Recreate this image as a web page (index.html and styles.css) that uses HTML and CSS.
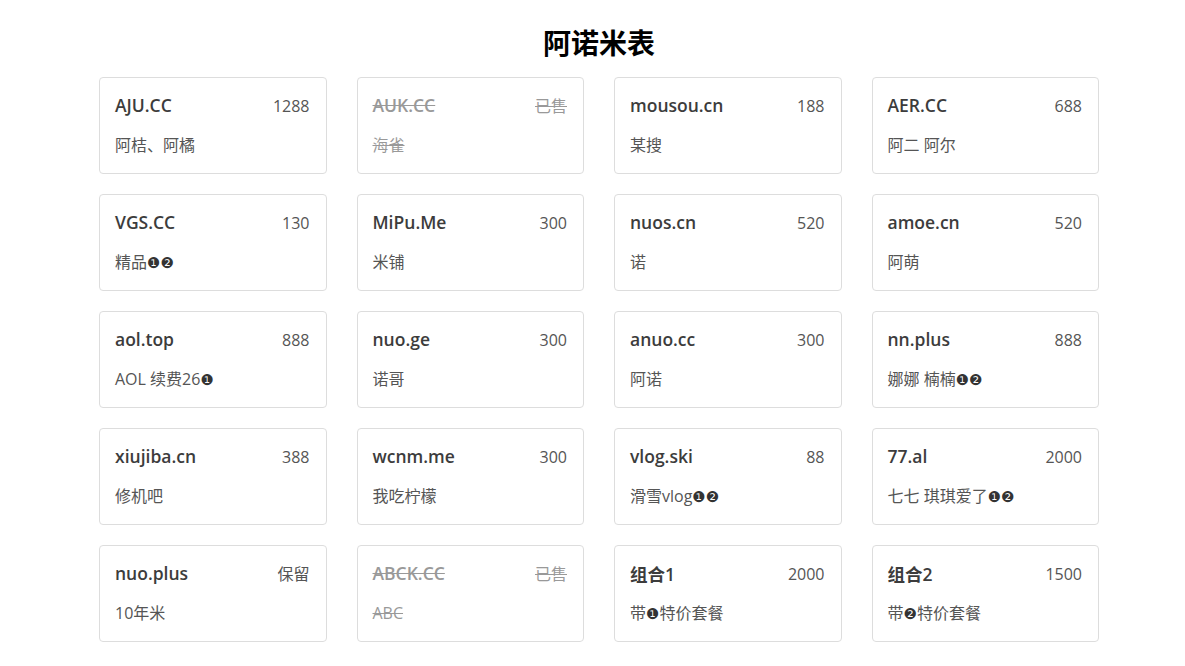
FILE: index.html
```html
<!DOCTYPE html>
<html lang="zh-CN">
<head>
<meta charset="utf-8">
<title>阿诺米表</title>
<link rel="stylesheet" href="styles.css">
</head>
<body>
<div class="page">
  <h1 class="title">阿诺米表</h1>
  <div class="grid">
    <div class="card"><div class="head"><span class="name">AJU.CC</span><span class="price">1288</span></div><div class="desc">阿桔、阿橘</div></div>
    <div class="card sold"><div class="head"><span class="name">AUK.CC</span><span class="price">已售</span></div><div class="desc">海雀</div></div>
    <div class="card"><div class="head"><span class="name">mousou.cn</span><span class="price">188</span></div><div class="desc">某搜</div></div>
    <div class="card"><div class="head"><span class="name">AER.CC</span><span class="price">688</span></div><div class="desc">阿二 阿尔</div></div>

    <div class="card"><div class="head"><span class="name">VGS.CC</span><span class="price">130</span></div><div class="desc">精品<span class="num">❶❷</span></div></div>
    <div class="card"><div class="head"><span class="name">MiPu.Me</span><span class="price">300</span></div><div class="desc">米铺</div></div>
    <div class="card"><div class="head"><span class="name">nuos.cn</span><span class="price">520</span></div><div class="desc">诺</div></div>
    <div class="card"><div class="head"><span class="name">amoe.cn</span><span class="price">520</span></div><div class="desc">阿萌</div></div>

    <div class="card"><div class="head"><span class="name">aol.top</span><span class="price">888</span></div><div class="desc">AOL 续费26<span class="num">❶</span></div></div>
    <div class="card"><div class="head"><span class="name">nuo.ge</span><span class="price">300</span></div><div class="desc">诺哥</div></div>
    <div class="card"><div class="head"><span class="name">anuo.cc</span><span class="price">300</span></div><div class="desc">阿诺</div></div>
    <div class="card"><div class="head"><span class="name">nn.plus</span><span class="price">888</span></div><div class="desc">娜娜 楠楠<span class="num">❶❷</span></div></div>

    <div class="card"><div class="head"><span class="name">xiujiba.cn</span><span class="price">388</span></div><div class="desc">修机吧</div></div>
    <div class="card"><div class="head"><span class="name">wcnm.me</span><span class="price">300</span></div><div class="desc">我吃柠檬</div></div>
    <div class="card"><div class="head"><span class="name">vlog.ski</span><span class="price">88</span></div><div class="desc">滑雪vlog<span class="num">❶❷</span></div></div>
    <div class="card"><div class="head"><span class="name">77.al</span><span class="price">2000</span></div><div class="desc">七七 琪琪爱了<span class="num">❶❷</span></div></div>

    <div class="card"><div class="head"><span class="name">nuo.plus</span><span class="price">保留</span></div><div class="desc">10年米</div></div>
    <div class="card sold"><div class="head"><span class="name">ABCK.CC</span><span class="price">已售</span></div><div class="desc">ABC</div></div>
    <div class="card"><div class="head"><span class="name">组合1</span><span class="price">2000</span></div><div class="desc">带<span class="num">❶</span>特价套餐</div></div>
    <div class="card"><div class="head"><span class="name">组合2</span><span class="price">1500</span></div><div class="desc">带<span class="num">❷</span>特价套餐</div></div>
  </div>
</div>
</body>
</html>
```

FILE: styles.css
```css
html, body {
  margin: 0;
  padding: 0;
  background: #fff;
}
body {
  font-family: "Open Sans", "Noto Sans CJK SC", sans-serif;
  color: #333;
}
.page {
  width: 1000px;
  margin-left: 99px;
}
.title {
  margin: 22px 0 15px;
  font-size: 28px;
  line-height: 40px;
  font-weight: 700;
  text-align: center;
  color: #000;
  font-family: "Noto Sans CJK SC", sans-serif;
}
.grid {
  display: grid;
  grid-template-columns: repeat(4, 1fr);
  column-gap: 30px;
  row-gap: 20px;
}
.card {
  border: 1px solid #ddd;
  border-radius: 4px;
  padding: 15px 16px 16px 15px;
  display: flex;
  flex-direction: column;
  gap: 16px;
}
.head {
  display: flex;
  justify-content: space-between;
  align-items: center;
  height: 24px;
}
.name {
  font-size: 17.5px;
  font-weight: 600;
  color: #3c3c3c;
}
.price {
  font-size: 16px;
  line-height: 24px;
  padding-top: 1px;
  color: #555;
}
.desc {
  font-size: 16px;
  line-height: 24px;
  height: 24px;
  color: #555;
}
.num {
  font-family: "DejaVu Sans", sans-serif;
  font-size: 15px;
  line-height: 1;
  color: #333;
}
.sold .name,
.sold .price,
.sold .desc {
  color: #999;
  text-decoration: line-through;
}
```
